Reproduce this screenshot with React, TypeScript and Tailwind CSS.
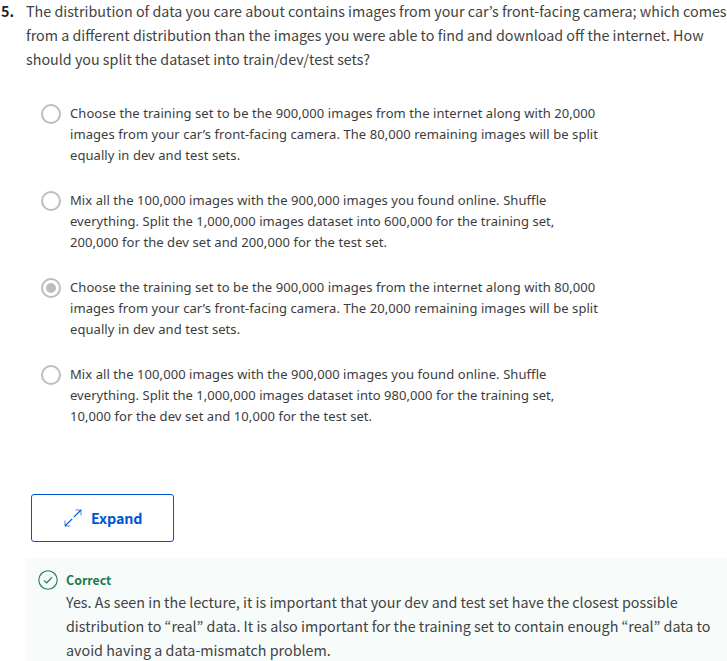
const options = [
  {
    selected: false,
    lines: [
      'Choose the training set to be the 900,000 images from the internet along with 20,000',
      'images from your car’s front-facing camera. The 80,000 remaining images will be split',
      'equally in dev and test sets.',
    ],
  },
  {
    selected: false,
    lines: [
      'Mix all the 100,000 images with the 900,000 images you found online. Shuffle',
      'everything. Split the 1,000,000 images dataset into 600,000 for the training set,',
      '200,000 for the dev set and 200,000 for the test set.',
    ],
  },
  {
    selected: true,
    lines: [
      'Choose the training set to be the 900,000 images from the internet along with 80,000',
      'images from your car’s front-facing camera. The 20,000 remaining images will be split',
      'equally in dev and test sets.',
    ],
  },
  {
    selected: false,
    lines: [
      'Mix all the 100,000 images with the 900,000 images you found online. Shuffle',
      'everything. Split the 1,000,000 images dataset into 980,000 for the training set,',
      '10,000 for the dev set and 10,000 for the test set.',
    ],
  },
];

function Radio({ selected }: { selected: boolean }) {
  return (
    <span className="mt-px flex size-5 shrink-0 items-center justify-center rounded-full border-2 border-[#bdbdbd]">
      {selected && <span className="size-2.5 rounded-full bg-[#bdbdbd]" />}
    </span>
  );
}

export default function App() {
  return (
    <main className="h-[661px] w-full overflow-hidden bg-white font-['Noto_Sans_CJK_KR',sans-serif] text-[14.32px] leading-6 text-[#424242]">
      <div className="-mt-px flex">
        <span className="w-[25px] shrink-0 pl-px font-bold text-[#1f1f1f]">5.</span>
        <p className="whitespace-nowrap pl-px">
          The distribution of data you care about contains images from your car’s front-facing camera; which comes
          <br />
          from a different distribution than the images you were able to find and download off the internet. How
          <br />
          should you split the dataset into train/dev/test sets?
        </p>
      </div>

      <ul className="mt-8 flex flex-col gap-6 pl-[41px]">
        {options.map((option, i) => (
          <li key={i} className="flex gap-[9px]">
            <Radio selected={option.selected} />
            <p className="whitespace-nowrap font-['Noto_Sans',sans-serif] text-[13px] leading-[21px] tracking-[0.07px] text-[#3c3c3c]">
              {option.lines.map((line) => (
                <span
                  key={line}
                  className={line.startsWith('everything') ? 'block tracking-[0.045px]' : 'block'}
                >
                  {line}
                </span>
              ))}
            </p>
          </li>
        ))}
      </ul>

      <button className="mt-[67px] ml-[31px] flex h-12 w-[143px] items-center rounded-[3px] border border-[#0056d2] pl-8 font-bold text-[#0056d2]">
        <svg className="mr-2 size-[19px]" viewBox="0 0 19 19" fill="none" stroke="currentColor">
          <path d="M9.8 8.2 17 1M8.2 9.8 1 17" strokeWidth="1.2" />
          <path d="M11.5 1H17v5.5M1 11.5V17h5.5" strokeOpacity="0.7" />
        </svg>
        <span className="tracking-[-0.1px]">Expand</span>
      </button>

      <section className="mt-4 ml-[26px] flex h-[104px] bg-[#f7fbf9] pt-3 pl-3">
        <svg className="mr-2 size-5 shrink-0" viewBox="0 0 20 20" fill="none" stroke="#1d7c50">
          <circle cx="10" cy="10" r="9.2" strokeWidth="1.1" />
          <path d="m6 10.3 2.7 2.7L14 7.2" strokeWidth="1.2" />
        </svg>
        <div>
          <h2 className="text-[12.4px] leading-5 font-bold text-[#1d7c50]">Correct</h2>
          <p className="whitespace-nowrap">
            Yes. As seen in the lecture, it is important that your dev and test set have the closest possible
            <br />
            distribution to “real” data. It is also important for the training set to contain enough “real” data to
            <br />
            avoid having a data-mismatch problem.
          </p>
        </div>
      </section>
    </main>
  );
}
